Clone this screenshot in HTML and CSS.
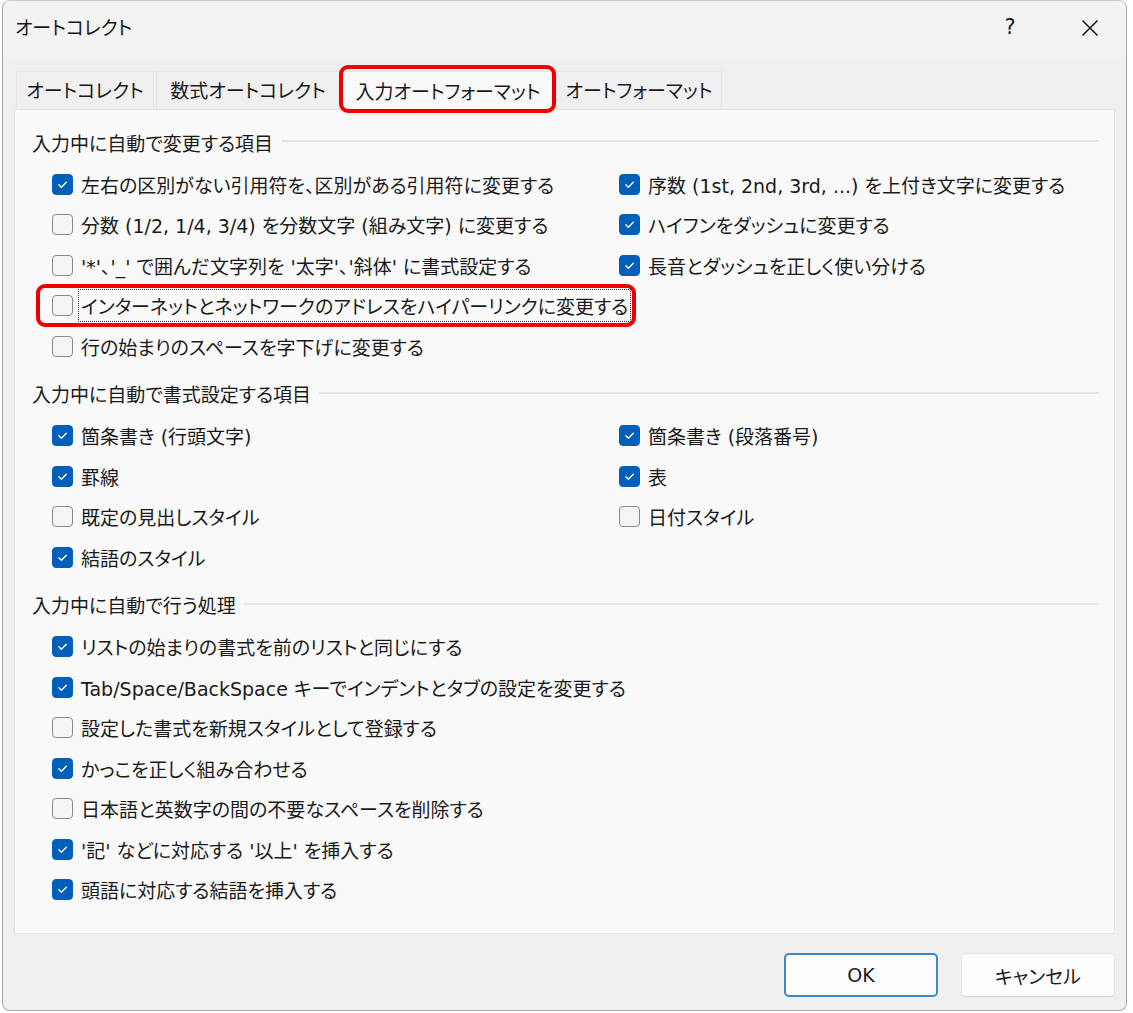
FILE: index.html
```html
<!DOCTYPE html>
<html lang="ja">
<head>
    <meta charset="UTF-8">
    <meta name="viewport" content="width=device-width, initial-scale=1.0">
    <title>オートコレクト</title>
    <link rel="stylesheet" href="styles.css">
</head>
<body>
    <div class="window">
        <div class="titlebar">
            <span class="title">オートコレクト</span>
            <div class="caption">
                <span class="help">?</span>
                <span class="close">
                    <svg width="18" height="18" viewBox="0 0 18 18"><path d="M1.5 1.5 L16.5 16.5 M16.5 1.5 L1.5 16.5" stroke="#1b1b1b" stroke-width="1.6" fill="none"/></svg>
                </span>
            </div>
        </div>

        <div class="content">
            <div class="tabs">
                <div class="tab tab-1">オートコレクト</div>
                <div class="tab tab-2">数式オートコレクト</div>
                <div class="tab tab-3 active">入力オートフォーマット<span class="mark"></span></div>
                <div class="tab tab-4">オートフォーマット</div>
            </div>

            <div class="panel">
                <section class="group">
                    <div class="group-title"><span>入力中に自動で変更する項目</span></div>
                    <div class="options">
                        <label class="option"><span class="box on"><svg viewBox="0 0 21 21"><path d="M6.5 10.8 L9.3 13.5 L14.7 8"/></svg></span>左右の区別がない引用符を、区別がある引用符に変更する</label>
                        <label class="option"><span class="box on"><svg viewBox="0 0 21 21"><path d="M6.5 10.8 L9.3 13.5 L14.7 8"/></svg></span>序数 (1st, 2nd, 3rd, ...) を上付き文字に変更する</label>
                        <label class="option"><span class="box"></span>分数 (1/2, 1/4, 3/4) を分数文字 (組み文字) に変更する</label>
                        <label class="option"><span class="box on"><svg viewBox="0 0 21 21"><path d="M6.5 10.8 L9.3 13.5 L14.7 8"/></svg></span>ハイフンをダッシュに変更する</label>
                        <label class="option"><span class="box"></span>'*'、'_' で囲んだ文字列を '太字'、'斜体' に書式設定する</label>
                        <label class="option"><span class="box on"><svg viewBox="0 0 21 21"><path d="M6.5 10.8 L9.3 13.5 L14.7 8"/></svg></span>長音とダッシュを正しく使い分ける</label>
                        <label class="option wide focused"><span class="box"></span><span class="focus">インターネットとネットワークのアドレスをハイパーリンクに変更する</span><span class="mark"></span></label>
                        <label class="option wide"><span class="box"></span>行の始まりのスペースを字下げに変更する</label>
                    </div>
                </section>

                <section class="group">
                    <div class="group-title"><span>入力中に自動で書式設定する項目</span></div>
                    <div class="options">
                        <label class="option"><span class="box on"><svg viewBox="0 0 21 21"><path d="M6.5 10.8 L9.3 13.5 L14.7 8"/></svg></span>箇条書き (行頭文字)</label>
                        <label class="option"><span class="box on"><svg viewBox="0 0 21 21"><path d="M6.5 10.8 L9.3 13.5 L14.7 8"/></svg></span>箇条書き (段落番号)</label>
                        <label class="option"><span class="box on"><svg viewBox="0 0 21 21"><path d="M6.5 10.8 L9.3 13.5 L14.7 8"/></svg></span>罫線</label>
                        <label class="option"><span class="box on"><svg viewBox="0 0 21 21"><path d="M6.5 10.8 L9.3 13.5 L14.7 8"/></svg></span>表</label>
                        <label class="option"><span class="box"></span>既定の見出しスタイル</label>
                        <label class="option"><span class="box"></span>日付スタイル</label>
                        <label class="option wide"><span class="box on"><svg viewBox="0 0 21 21"><path d="M6.5 10.8 L9.3 13.5 L14.7 8"/></svg></span>結語のスタイル</label>
                    </div>
                </section>

                <section class="group">
                    <div class="group-title"><span>入力中に自動で行う処理</span></div>
                    <div class="options single">
                        <label class="option"><span class="box on"><svg viewBox="0 0 21 21"><path d="M6.5 10.8 L9.3 13.5 L14.7 8"/></svg></span>リストの始まりの書式を前のリストと同じにする</label>
                        <label class="option"><span class="box on"><svg viewBox="0 0 21 21"><path d="M6.5 10.8 L9.3 13.5 L14.7 8"/></svg></span>Tab/Space/BackSpace キーでインデントとタブの設定を変更する</label>
                        <label class="option"><span class="box"></span>設定した書式を新規スタイルとして登録する</label>
                        <label class="option"><span class="box on"><svg viewBox="0 0 21 21"><path d="M6.5 10.8 L9.3 13.5 L14.7 8"/></svg></span>かっこを正しく組み合わせる</label>
                        <label class="option"><span class="box"></span>日本語と英数字の間の不要なスペースを削除する</label>
                        <label class="option"><span class="box on"><svg viewBox="0 0 21 21"><path d="M6.5 10.8 L9.3 13.5 L14.7 8"/></svg></span>'記' などに対応する '以上' を挿入する</label>
                        <label class="option"><span class="box on"><svg viewBox="0 0 21 21"><path d="M6.5 10.8 L9.3 13.5 L14.7 8"/></svg></span>頭語に対応する結語を挿入する</label>
                    </div>
                </section>
            </div>

            <div class="buttons">
                <button class="btn default">OK</button>
                <button class="btn">キャンセル</button>
            </div>
        </div>
    </div>
</body>
</html>
```

FILE: styles.css
```css
body {
    margin: 0;
    background: #ffffff;
    font-family: "DejaVu Sans", "Noto Sans CJK JP", sans-serif;
    font-feature-settings: "palt";
    color: #1a1a1a;
}
.window {
    width: 1123px;
    height: 1009px;
    margin-left: 2px;
    border: 1px solid #a8a8a8;
    border-top-color: #c8c8c8;
    border-radius: 8px;
    background: #f0f0f0;
    overflow: hidden;
}
.titlebar {
    height: 56px;
    background: #f3f3f3;
    display: flex;
    align-items: center;
    justify-content: space-between;
    padding-left: 12px;
}
.title {
    font-size: 19px;
    margin-top: -5px;
}
.caption {
    display: flex;
    align-items: center;
    height: 100%;
}
.help {
    font-size: 21px;
    width: 88px;
    text-align: center;
    margin-top: -5px;
}
.close {
    width: 72px;
    display: flex;
    justify-content: center;
    margin-top: -3px;
}
.content {
    padding: 14px 0 0 11px;
}
.tabs {
    display: flex;
    gap: 2px;
    margin-left: 2px;
    height: 38px;
}
.tab {
    position: relative;
    display: flex;
    align-items: center;
    justify-content: center;
    font-size: 19px;
    background: #f0f0f0;
    border: 1px solid #e6e6e6;
    border-bottom: none;
    box-sizing: border-box;
    padding-bottom: 2px;
}
.tab-1 { width: 138px; }
.tab-2 { width: 184px; }
.tab-3 { width: 212px; }
.tab-4 { width: 166px; }
.tab.active {
    background: #f9f9f9;
    z-index: 1;
    margin-bottom: -1px;
    height: 39px;
}
.tab .mark {
    position: absolute;
    left: -4px;
    right: -3px;
    top: -7px;
    bottom: -3px;
    border: 4px solid #ee0000;
    border-radius: 9px;
}
.panel {
    width: 1101px;
    height: 825px;
    box-sizing: border-box;
    background: #f9f9f9;
    border: 1px solid #e5e5e5;
    padding: 12px 15px 0 17px;
}
.group + .group {
    margin-top: 7px;
}
.group-title {
    display: flex;
    align-items: center;
    height: 40px;
    font-size: 19px;
    margin-bottom: 2px;
}
.group-title span {
    padding-right: 8px;
}
.group-title::after {
    content: "";
    flex: 1;
    height: 2px;
    background: #e6e6e6;
    margin-top: -2px;
}
.options {
    display: grid;
    grid-template-columns: 567px 1fr;
    grid-auto-rows: 40.5px;
    padding-left: 20px;
}
.options.single {
    grid-template-columns: 1fr;
}
.option {
    position: relative;
    display: inline-flex;
    align-items: center;
    justify-self: start;
    font-size: 19px;
    white-space: nowrap;
}
.option.wide {
    grid-column: 1 / -1;
}
.box {
    width: 21px;
    height: 21px;
    box-sizing: border-box;
    border: 1px solid #8a8a8a;
    border-radius: 4px;
    background: #f4f4f4;
    margin-right: 8px;
    flex-shrink: 0;
}
.box.on {
    background: #005fb8;
    border-color: #005fb8;
}
.box svg {
    display: block;
    width: 19px;
    height: 19px;
}
.box svg path {
    fill: none;
    stroke: #ffffff;
    stroke-width: 1.5;
    stroke-linecap: round;
    stroke-linejoin: round;
}
.focus {
    outline: 1px dotted #333;
    outline-offset: 2px;
}
.option .mark {
    position: absolute;
    left: -16px;
    right: -8px;
    top: -2px;
    bottom: -1px;
    border: 4px solid #ee0000;
    border-radius: 9px;
}
.buttons {
    display: flex;
    justify-content: flex-end;
    gap: 23px;
    width: 1101px;
    margin-top: 19px;
}
.btn {
    width: 154px;
    height: 44px;
    font-family: "DejaVu Sans", "Noto Sans CJK JP", sans-serif;
    font-feature-settings: "palt";
    font-size: 19px;
    color: #1a1a1a;
    background: #fdfdfd;
    border: 1px solid #e3e3e3;
    border-bottom-color: #cfcfcf;
    border-radius: 5px;
}
.btn.default {
    border: 2px solid #3a86d4;
}
```
